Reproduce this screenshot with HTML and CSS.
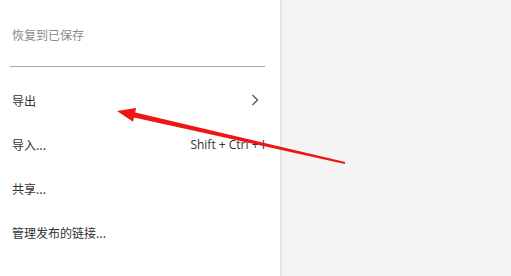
FILE: index.html
```html
<!DOCTYPE html>
<html lang="zh-CN">
<head>
<meta charset="UTF-8" />
<title>文件菜单</title>
<link rel="stylesheet" href="styles.css">
</head>
<body>
<div class="app">
  <!-- File menu panel -->
  <div class="menu">
    <div class="item disabled">恢复到已保存</div>
    <div class="separator"></div>
    <div class="item">
      <span>导出</span>
      <svg class="chevron" width="8" height="12" viewBox="0 0 8 12">
        <path d="M1.5 1 L6.5 6 L1.5 11" fill="none" stroke="#555" stroke-width="1.3"/>
      </svg>
    </div>
    <div class="item">
      <span>导入...</span>
      <span class="shortcut">Shift + Ctrl + I</span>
    </div>
    <div class="item">共享...</div>
    <div class="item">管理发布的链接...</div>
  </div>

  <!-- Empty workspace -->
  <div class="workspace"></div>

  <!-- Annotation arrow -->
  <svg class="arrow" width="511" height="276" viewBox="0 0 511 276">
    <polygon fill="#f01414" points="117,111 136.1,108 135.2,112.6 345.2,162 344.8,164 134,117.4 133,121.8"/>
  </svg>
</div>
</body>
</html>
```

FILE: styles.css
```css
body {
  margin: 0;
  font-family: "Noto Sans CJK SC", "Noto Sans", sans-serif;
  font-size: 12px;
  color: #333;
}
.app {
  position: relative;
  display: flex;
  width: 511px;
  height: 276px;
  overflow: hidden;
}
/* Menu panel */
.menu {
  width: 282px;
  flex-shrink: 0;
  box-sizing: border-box;
  padding: 12px 15px 0 12px;
  background: #fff;
  border-right: 2px solid #e4e4e4;
}
.item {
  display: flex;
  align-items: center;
  justify-content: space-between;
  height: 44px;
}
.item.disabled {
  color: #8a8a8a;
}
.chevron {
  margin-right: 6px;
}
.shortcut {
  font-family: "Open Sans", "Noto Sans", sans-serif;
  font-size: 12px;
  color: #333;
}
.separator {
  height: 1px;
  background: #a8a8a8;
  margin: 10px 0 11px -2px;
}
/* Workspace */
.workspace {
  flex: 1;
  background: #f4f4f4;
}
.arrow {
  position: absolute;
  top: 0;
  left: 0;
  pointer-events: none;
}
```
